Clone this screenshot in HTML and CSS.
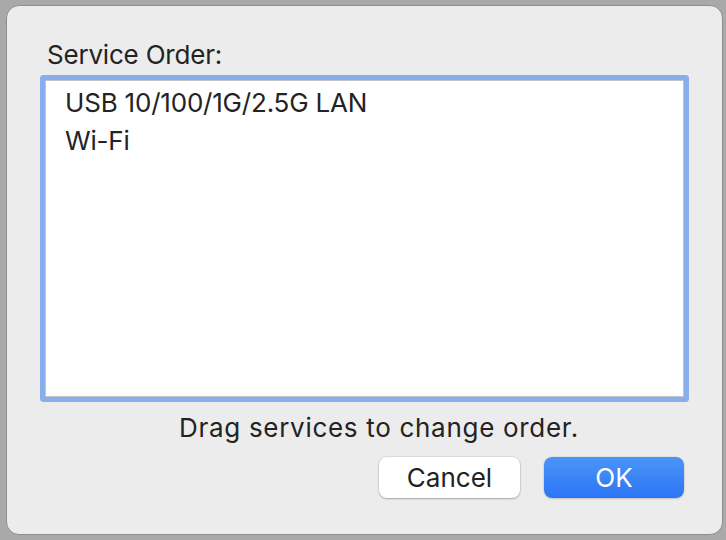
FILE: index.html
```html
<!DOCTYPE html>
<html>
<head>
<meta charset="utf-8">
<link rel="stylesheet" href="styles.css">
</head>
<body>
<div class="dialog">
  <div class="label">Service Order:</div>
  <div class="list">
    <div class="item">USB 10/100/1G/2.5G LAN</div>
    <div class="item">Wi-Fi</div>
  </div>
  <div class="hint">Drag services to change order.</div>
  <div class="buttons">
    <button class="btn cancel">Cancel</button>
    <button class="btn ok">OK</button>
  </div>
</div>
</body>
</html>
```

FILE: styles.css
```css
html, body {
  margin: 0;
  padding: 0;
}
body {
  width: 726px;
  height: 540px;
  background: #a9a9a9;
  font-family: Inter, "Liberation Sans", sans-serif;
  font-size: 26px;
  color: #232323;
  overflow: hidden;
}
.dialog {
  box-sizing: border-box;
  margin: 5px 0 0 6px;
  width: 717px;
  height: 530px;
  background: #ececec;
  border: 1px solid #8e8e8e;
  border-radius: 13px;
  padding: 0 38px;
  display: flex;
  flex-direction: column;
}
.label {
  margin-top: 33px;
  line-height: 32px;
  padding-left: 2px;
  letter-spacing: -0.2px;
}
.list {
  margin-top: 9px;
  height: 312px;
  background: #fff;
  border: 1px solid #c4c4c4;
  box-shadow: 0 0 0 5px #8aadeb;
  border-radius: 1px;
  padding-top: 3px;
  padding-left: 19px;
}
.item {
  line-height: 38px;
  letter-spacing: -0.2px;
}
.hint {
  margin-top: 15px;
  padding-left: 134px;
  line-height: 32px;
  letter-spacing: 0.7px;
}
.buttons {
  margin-top: 13px;
  display: flex;
  justify-content: flex-end;
  gap: 24px;
}
.btn {
  font-family: inherit;
  font-size: 26px;
  height: 41px;
  border-radius: 8px;
  border: none;
  padding: 0;
  line-height: 41px;
}
.cancel {
  width: 141px;
  background: #fff;
  color: #232323;
  box-shadow: 0 0 0 1px rgba(0,0,0,0.06), 0 1px 2px rgba(0,0,0,0.25);
}
.ok {
  width: 140px;
  background: linear-gradient(#4a95f9, #2c75f5);
  color: #fff;
  box-shadow: 0 0 0 1px rgba(0,0,0,0.04), 0 1px 2px rgba(0,0,0,0.15);
}
```
